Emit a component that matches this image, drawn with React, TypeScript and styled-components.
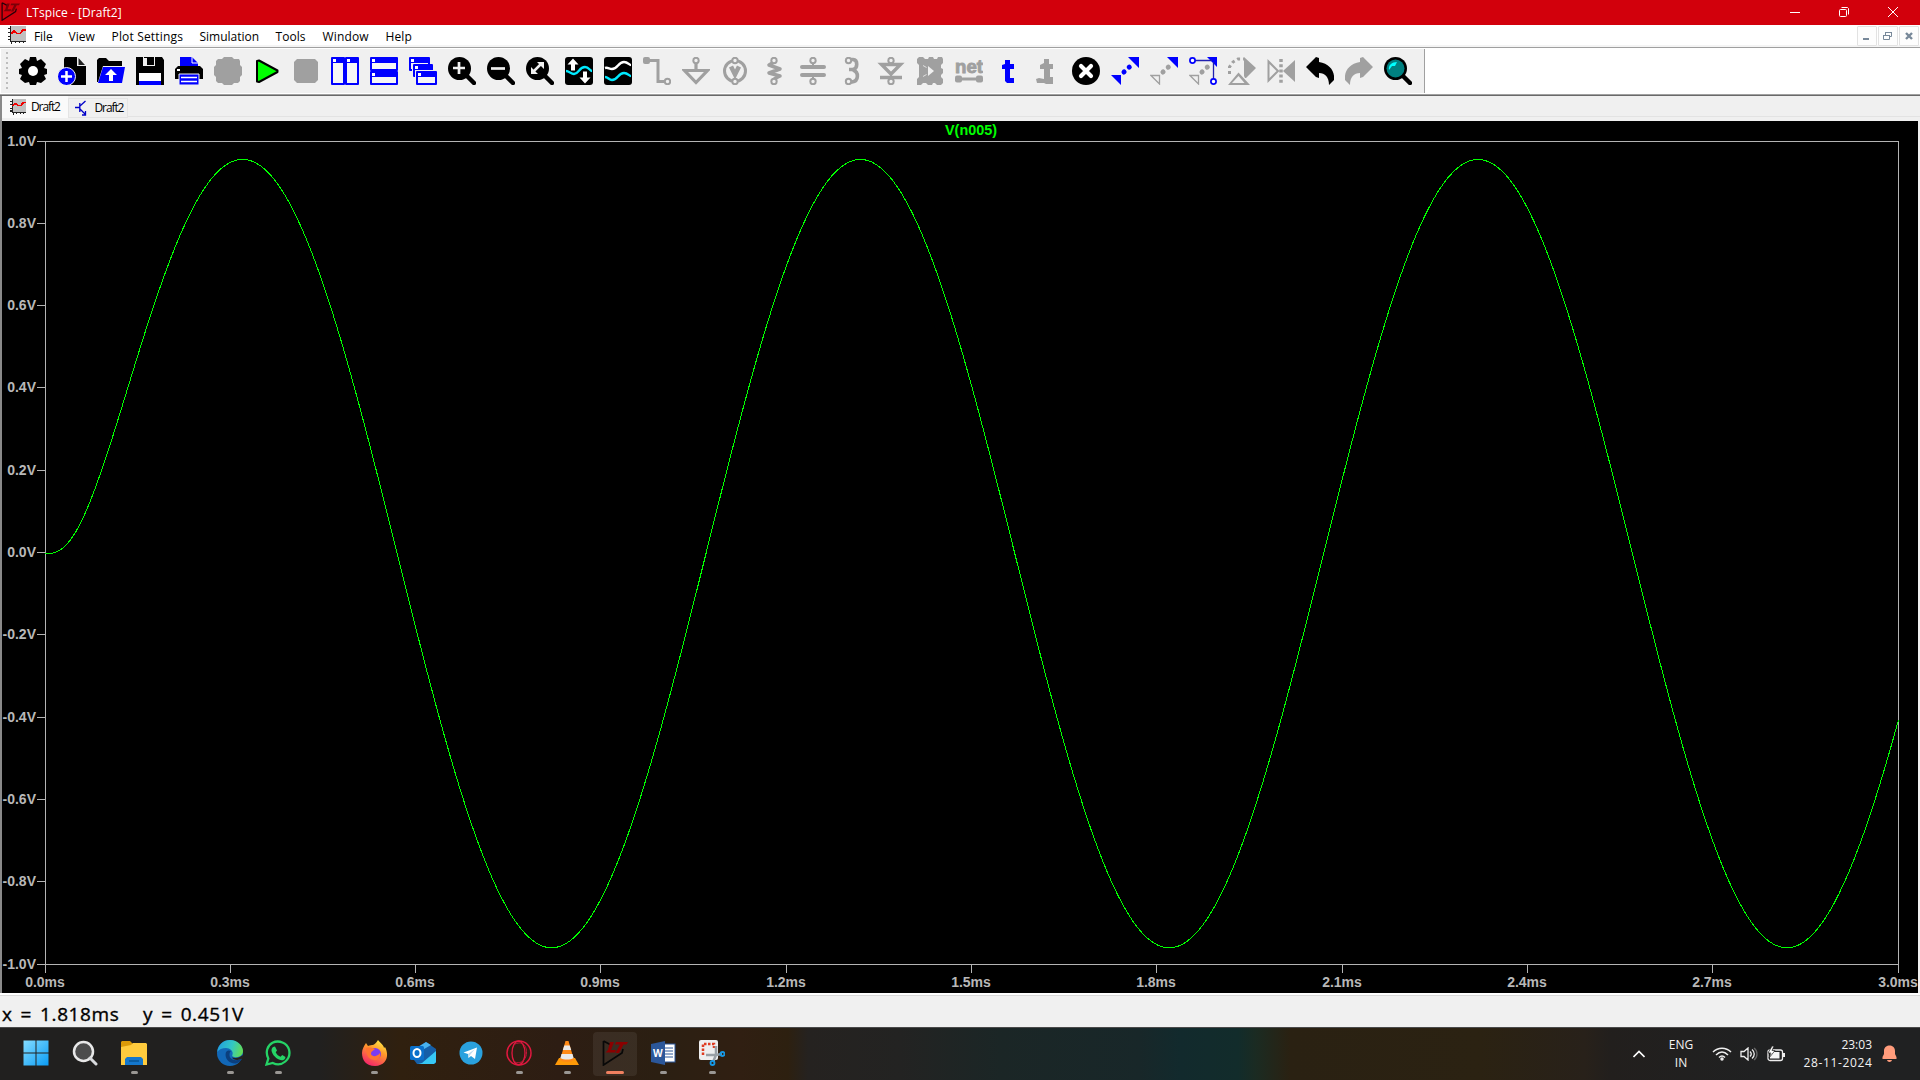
import React from "react";
import styled, { createGlobalStyle } from "styled-components";

const UI = `"Open Sans", "Noto Sans", sans-serif`;

const Global = createGlobalStyle`
  html, body { margin: 0; padding: 0; background: #f0f0f0; overflow: hidden; }
  *, *::before, *::after { box-sizing: border-box; }
`;

const Screen = styled.div`
  width: 1920px;
  height: 1080px;
  display: flex;
  flex-direction: column;
  font-family: ${UI};
  font-size: 12px;
  color: #000;
  white-space: pre;
`;

/* ---------- title and menu ---------- */

const TitleBar = styled.header`
  height: 25px;
  background: #d2000c;
  color: #fff;
  display: flex;
  align-items: center;
  padding: 0 3px 2px 1px;
`;

const Title = styled.span<{ $track: number }>`
  padding-left: 6px;
  flex: 1;
  line-height: 23px;
  padding-top: 2px;
  letter-spacing: ${(p) => p.$track}px;
`;

const CaptionButton = styled.div`
  width: 49px;
  height: 23px;
  display: grid;
  place-items: center;
`;

const MenuBar = styled.nav`
  height: 23px;
  background: #fff;
  border-bottom: 1px solid #a0a0a0;
  box-shadow: inset 0 -2px #f4f4f4;
  display: flex;
  align-items: flex-start;
  padding: 1px 1px 0 8px;
`;

const MenuIcon = styled.div`
  width: 26px;
  height: 18px;
`;

const MenuItem = styled.span<{ $w: number; $track: number }>`
  width: ${(p) => p.$w}px;
  line-height: 21px;
  letter-spacing: ${(p) => p.$track}px;
`;

const Spacer = styled.div`
  flex: 1;
`;

const MdiButton = styled.div`
  width: 20px;
  height: 20px;
  margin-left: 1px;
  background: #fdfdfd;
  border: 1px solid #e2e2e2;
  border-radius: 1px;
  display: grid;
  place-items: center;
`;

/* ---------- toolbar ---------- */

const ToolRow = styled.div`
  height: 48px;
  background: #fff;
  border-bottom: 1px solid #696969;
  box-shadow: inset 0 -1px #a0a0a0;
  display: flex;
  padding: 1px 0 2px 1px;
`;

const Toolbar = styled.div`
  width: 1424px;
  background: #f0f0f0;
  border-right: 1px solid #a0a0a0;
  display: flex;
  align-items: center;
  padding-left: 5px;
`;

const Grip = styled.div`
  width: 2px;
  height: 38px;
  margin-right: 5px;
  background: repeating-linear-gradient(#bdbdbd 0 2px, #f0f0f0 2px 5px);
`;

const Tool = styled.div`
  width: 39px;
  height: 28px;
  margin-top: -1px;
  display: grid;
  place-items: center;
`;

/* ---------- document tabs ---------- */

const TabStrip = styled.div`
  height: 25px;
  background: #f0f0f0;
  border-left: 2px solid #8a8a8a;
  display: flex;
  align-items: flex-start;
  box-shadow: inset 0 -4px #f0f0f0, inset 0 -5px #e3e3e3;
`;

const Tab = styled.div<{ $active?: boolean }>`
  display: flex;
  align-items: center;
  height: ${(p) => (p.$active ? 22 : 20)}px;
  width: ${(p) => (p.$active ? 66 : 60)}px;
  margin-top: ${(p) => (p.$active ? 0 : 2)}px;
  padding-left: ${(p) => (p.$active ? 7 : 6)}px;
  padding-bottom: ${(p) => (p.$active ? 1 : 0)}px;
  background: ${(p) => (p.$active ? "#fafafa" : "#f0f0f0")};
  border: 1px solid ${(p) => (p.$active ? "#fafafa" : "#e4e4e4")};
`;

const TabLabel = styled.span<{ $gap: number }>`
  margin-left: ${(p) => p.$gap}px;
  letter-spacing: -1.1px;
  line-height: 16px;
`;

/* ---------- plot ---------- */

const PlotPane = styled.main`
  height: 872px;
  background: #000;
  border-left: 2px solid #8a8a8a;
  border-right: 2px solid #f0f0f0;
`;

const Axis = styled.text`
  font: bold 14px "Liberation Sans", Arial, sans-serif;
  fill: #b8b8b8;
`;

const Trace = styled(Axis)`
  font-size: 14.4px;
  fill: #00ff00;
`;

const StatusBar = styled.footer`
  height: 34px;
  background: #f0f0f0;
  border-top: 1px solid #fff;
  box-shadow: inset 0 1px #fff, inset 0 2px #d9d9d9;
  display: flex;
  align-items: center;
  padding: 6px 0 0 2px;
  font-size: 19px;
  -webkit-text-stroke: 0.35px #000;
`;

const Reading = styled.span<{ $w: number }>`
  width: ${(p) => p.$w}px;
  line-height: 26px;
  letter-spacing: 0.6px;
  word-spacing: 2.5px;
`;

/* ---------- taskbar ---------- */

const Taskbar = styled.div`
  height: 53px;
  border-top: 1px solid #4a4a4a;
  background: linear-gradient(90deg, #21201f 0, #21201f 320px, #30200f 400px, #2d1d13 560px, #2b1f12 660px, #301f12 740px, #2d2010 788px, #252220 808px, #232322 900px, #1b2626 1000px, #182729 1140px, #122a2d 1180px, #122c2b 1238px, #1b2b22 1256px, #2a2112 1290px, #2b2212 1480px, #28211a 1585px, #221f1d 1610px, #202122 1760px);
  color: #f3f3f3;
  display: flex;
  align-items: center;
`;

const TaskSlot = styled.div<{ $w: number; $active?: boolean }>`
  width: ${(p) => p.$w}px;
  height: 44px;
  margin-left: ${(p) => (p.$active ? 2 : 0)}px;
  display: flex;
  flex-direction: column;
  align-items: center;
  padding-top: 8px;
  border-radius: 4px;
  background: ${(p) => (p.$active ? "rgba(255,255,255,0.07)" : "transparent")};
`;

const RunMark = styled.div<{ $active?: boolean }>`
  width: ${(p) => (p.$active ? 18 : 7)}px;
  height: 3px;
  margin-top: 5px;
  border-radius: 2px;
  background: ${(p) => (p.$active ? "#f08060" : "#9a9794")};
`;

const Tray = styled.div`
  display: flex;
  align-items: center;
  height: 52px;
`;

const TrayIcon = styled.div<{ $w: number }>`
  width: ${(p) => p.$w}px;
  display: flex;
  justify-content: center;
`;

const TrayText = styled.div<{ $w: number; $align: string }>`
  width: ${(p) => p.$w}px;
  text-align: ${(p) => p.$align};
  line-height: 18px;
`;

const DateLine = styled.div`
  letter-spacing: 0.65px;
  margin-right: -0.65px;
`;

/* ---------- icons ---------- */

const B = "#0000ff";
const G = "#a0a0a0";

const LtShape = ({ ink, red }: { ink: string; red: string }) => (
  <>
    <path d="M1.500 1V25L20 13L21 9M1.500 1L9 5" fill="none" stroke={ink} strokeWidth="1.700" />
    <path d="M8 2H12L9 10H14L13 12.500H3.500L6 10ZM14 2H26L24.500 4.500H21.500L17 13H13.500L18 4.500H13Z" fill={red} />
  </>
);

const ChartIcon = ({ size = 18 }: { size?: number }) => (
  <svg width={size} height={size} viewBox="0 0 18 18" shapeRendering="crispEdges">
    <rect x="3" width="15" height="15" fill="#c0c0c0" />
    <path d="M2.500 0V15.500H18M0 2.500H3M0 6.500H3M0 10.500H3M0 13.500H3M3.500 15V18M7.500 15V17M11.500 15V17M15.500 15V17" stroke="#222" fill="none" strokeWidth="1.300" />
    <path d="M3 8L6 5L9 7.500H12L15 4H18" stroke="#f00000" strokeWidth="1.800" fill="none" />
  </svg>
);

const TransistorIcon = () => (
  <svg width="12" height="16" viewBox="0 0 12 16">
    <path d="M0 7.500H4.500M4.800 3V12M5 6L10.500 1M5 9L10.500 14.500M10.500 11V15H7" stroke="#0000c8" strokeWidth="1.300" fill="none" />
  </svg>
);

const Glass = () => (
  <>
    <circle cx="11.500" cy="11.500" r="11.500" fill="#000" />
    <path d="M19 19L26 26" stroke="#000" strokeWidth="4.500" strokeLinecap="round" />
  </>
);

const Win = ({ x, y, w, h }: { x: number; y: number; w: number; h: number }) => (
  <>
    <rect x={x} y={y} width={w} height={h} rx="1" fill={B} />
    <rect x={x + 2} y={y + 6} width={w - 4} height={h - 8} fill="#f6f6f6" />
    <rect x={x + 2} y={y + 2} width="3" height="3" fill="#fff" />
  </>
);

const Pin = ({ x, y }: { x: number; y: number }) => (
  <circle cx={x} cy={y} r="2.700" fill="#f0f0f0" stroke={G} strokeWidth="2" />
);

const tools: React.ReactNode[] = [
  <>
    <path d="M11 0H17L18 4L22 2L27 7L25 11L28 12V17L25 18L27 22L22 26L18 25L17 28H11L10 25L6 26L1 22L3 18L0 17V12L3 11L1 7L6 2L10 4Z" />
    <circle cx="14" cy="14" r="5" fill="#fff" />
  </>,
  <>
    <path d="M7 0H19V9H28V28H6V2Z" />
    <path d="M20.500 1L27 8H20.500Z" fill="#222" />
    <circle cx="8.500" cy="19.500" r="9" fill={B} stroke="#f0f0f0" />
    <path d="M8.500 14V25M3 19.500H14" stroke="#fff" strokeWidth="2.500" />
  </>,
  <>
    <path d="M0 25V3L2 1H9L12 4H25V9H6L1 25Z" />
    <path d="M6 10H28L25 26H1Z" fill={B} />
    <path d="M14 12L20 18H16V24H12V18H8Z" fill="#fff" />
  </>,
  <>
    <path d="M0 0H26L28 3V28H0Z" />
    <path d="M7 0H19V9H7Z" fill="#f0f0f0" />
    <path d="M8 0H18V8H11V1H8Z" />
    <rect x="3" y="16" width="22" height="8" fill="#fff" />
    <rect x="3" y="24" width="22" height="4" fill={B} />
  </>,
  <>
    <path d="M5 0H17L23 6V10H5Z" fill={B} />
    <path d="M17 0V6H23" fill="none" stroke="#fff" />
    <path d="M3 9H25L28 12V22H0V12Z" />
    <path d="M4 17H24V28H4Z" fill={B} stroke="#f0f0f0" />
    <path d="M6 20.500H22M6 24.500H22" stroke="#fff" strokeWidth="1.500" />
    <rect x="2" y="12" width="3" height="2" fill="#fff" />
  </>,
  <path d="M10 0H18L20 2H25L26 4V8L28 10V18L26 20V24L24 26H20L18 28H10L8 26H4L2 24V20L0 18V10L2 8V4L4 2H8Z" fill={G} />,
  <path d="M4 4V24.500L6 25L24.500 15V13.500L6 3.500Z" fill="#00ff00" stroke="#000" strokeWidth="2" strokeLinejoin="round" />,
  <path d="M5 2H23L26 5V23L23 26H5L2 23V5Z" fill={G} />,
  <><Win x={0} y={0} w={14} h={28} /><Win x={14} y={0} w={14} h={28} /></>,
  <><Win x={0} y={0} w={28} h={14} /><Win x={0} y={14} w={28} h={14} /></>,
  <>
    <Win x={0} y={0} w={21} h={14} />
    <path d="M3 7H24V20H3Z" fill="#f0f0f0" /><Win x={4} y={7} w={20} h={13} />
    <path d="M6 13H28V28H6Z" fill="#f0f0f0" /><Win x={7} y={14} w={21} h={14} />
  </>,
  <><Glass /><path d="M11 5V17M5 11H17" stroke="#f0f0f0" strokeWidth="2.700" /></>,
  <><Glass /><path d="M4 11.500H18" stroke="#f0f0f0" strokeWidth="2.700" /></>,
  <><Glass /><path d="M8 14L15 7" stroke="#f0f0f0" strokeWidth="2.500" /><path d="M11 5H18V12ZM5 10V17H12Z" fill="#f0f0f0" /></>,
  <>
    <rect width="28" height="28" rx="3" />
    <path d="M1 14C4 14 6 17 9 17C14 17 14 10 20 10C24 10 25 14 27 14" stroke="#00eaff" strokeWidth="2.300" fill="none" />
    <path d="M8 1.500L13.500 7.500H10V13.500H6V7.500H2.500ZM20 26.500L14.500 20.500H18V14.500H22V20.500H25.500Z" fill="#fff" />
  </>,
  <>
    <rect width="28" height="28" rx="3" />
    <path d="M1 11C4 10 5 12 8 12C14 12 14 5 20 5C24 5 25 8 27 8" stroke="#fff" strokeWidth="2.500" fill="none" />
    <path d="M1 20C4 20 5 23 8 23C14 23 14 16 20 16C24 16 25 19 27 19" stroke="#00eaff" strokeWidth="2.500" fill="none" />
  </>,
  <>
    <path d="M4 3.500H15V24.500H23" stroke={G} strokeWidth="3" fill="none" />
    <rect x="0" y="0" width="7" height="7" rx="2" fill={G} /><Pin x={24.500} y={24.500} />
  </>,
  <><path d="M14 5V13M2.500 13.500H25.500L14 25.500Z" stroke={G} strokeWidth="3.200" fill="none" /><Pin x={14} y={3.500} /></>,
  <><circle cx="14" cy="14" r="10.500" stroke={G} strokeWidth="3" fill="none" /><path d="M10 9.500L14 17.500L18 9.500" stroke={G} strokeWidth="4.500" fill="none" /><Pin x={14} y={3.500} /><Pin x={14} y={24.500} /></>,
  <><path d="M14 5L9 8L20 12L9 16L20 19L14 22" stroke={G} strokeWidth="3.500" fill="none" strokeLinejoin="round" /><Pin x={14} y={3.500} /><Pin x={14} y={24.500} /></>,
  <><path d="M3 10H25M3 18H25" stroke={G} strokeWidth="4" strokeLinecap="round" /><path d="M14 4V9M14 19V24" stroke={G} strokeWidth="2" /><Pin x={14} y={3.500} /><Pin x={14} y={24.500} /></>,
  <><path d="M11 2.500H15C20 3 20 11 15 12.500H11M15 13C21 15 21 24 14 25H10" stroke={G} strokeWidth="3.600" fill="none" /><Pin x={10.500} y={3.500} /><Pin x={10.500} y={24.500} /></>,
  <><path d="M4.500 7.500H23.500L14 17ZM3 20.500H25" stroke={G} strokeWidth="3.400" fill="none" /><path d="M14 18V22" stroke={G} strokeWidth="2" /><Pin x={14} y={3.500} /><Pin x={14} y={24.500} /></>,
  <>
    <path d="M1 2L3 0H7L9 2H12L13 0H17L18 2H21L22 0H26L27 2V6L25 8V11L27 12V16L25 18V20L27 22V26L25 28H21L19 26H17L16 28H12L10 26H7L5 28H1V22L3 20V8L1 6Z" fill={G} />
    <path d="M12 9V19L18 14Z" fill="#f0f0f0" />
    <path d="M7 8.500L10.500 10.500M7 19.500L10.500 17.500" stroke="#f0f0f0" strokeWidth="0.800" />
  </>,
  <>
    <text x="14" y="16" textAnchor="middle" textLength="28" lengthAdjust="spacingAndGlyphs" fill={G} stroke={G} strokeWidth="0.900" fontFamily="Liberation Sans" fontWeight="bold" fontSize="19">net</text>
    <path d="M4 22H24" stroke={G} strokeWidth="3" /><rect y="18.500" width="7" height="7" rx="2" fill={G} /><rect x="21" y="18.500" width="7" height="7" rx="2" fill={G} />
  </>,
  <path d="M11 3H16V7H20V12H16V21H20V26H13L11 24V12H8V8L11 7Z" fill={B} />,
  <path d="M11 2H16V7H20V12H17V20H20V27H13L11 26H4L3 22L6 21L11 22V12H7V8L11 6Z" fill={G} />,
  <><circle cx="14" cy="14" r="14" /><path d="M9 9L19 19M19 9L9 19" stroke="#fff" strokeWidth="4.200" strokeLinecap="round" /></>,
  <><path d="M17 0H28V11ZM0 18H10V28Z" fill={B} /><path d="M13 15L20 8.500" stroke={B} strokeWidth="5" strokeLinecap="round" strokeDasharray="0.100 7" /></>,
  <><path d="M17 0H28V11Z" fill={B} /><path d="M1 18.500H9.500V27Z" fill="none" stroke={G} strokeWidth="1.300" /><path d="M13 15L19 9.500" stroke={G} strokeWidth="5" strokeLinecap="round" strokeDasharray="0.100 7" /></>,
  <>
    <path d="M1 18.500H9.500V27Z" fill="none" stroke={G} strokeWidth="1.300" /><path d="M13 15L19 9.500" stroke={G} strokeWidth="5" strokeLinecap="round" strokeDasharray="0.100 7" />
    <path d="M18 0H28V10Z" fill={B} /><path d="M6 3.500H23M24.500 5V22" stroke="#2020b0" strokeWidth="1.300" />
    <circle cx="3.500" cy="3.500" r="2.600" fill="#fff" stroke={B} strokeWidth="1.700" /><circle cx="24.500" cy="24.500" r="2.600" fill="#fff" stroke={B} strokeWidth="1.700" />
  </>,
  <>
    <path d="M16 0L28 11L18 21H17L16 19ZM10.500 15.500L22 28H0Z" fill={G} /><path d="M10.500 19L16.500 26H4Z" fill="#f0f0f0" />
    <path d="M1.500 17V10L5 5L10 2H16" fill="none" stroke={G} strokeWidth="3" strokeDasharray="3 3" />
  </>,
  <><path d="M1.500 4.500V23.500L11 14Z" fill="none" stroke={G} strokeWidth="2" /><path d="M28 3V25L16 14Z" fill={G} /><path d="M14 2V27" stroke={G} strokeWidth="3.500" strokeDasharray="3 2.200" /></>,
  <path d="M0 10L10 0L13 1V5C24 7 29 14 28 23L23 28C23 20 19 16 13 16V21L10 20Z" />,
  <path d="M28 10L18 0L15 1V5C4 7 -1 14 0 23L5 28C5 20 9 16 15 16V21L18 20Z" fill={G} />,
  <>
    <path d="M19 19L26 26" stroke="#000" strokeWidth="4.500" strokeLinecap="round" /><circle cx="11.500" cy="11.500" r="11.500" />
    <circle cx="11.500" cy="11.500" r="9" fill="#008080" /><path d="M5 13C4 8 8 5 13 5L11 9L8 9Z" fill="#00ffff" />
  </>,
];

const TaskSvg = ({ children, size = 26 }: { children: React.ReactNode; size?: number }) => (
  <svg width={size} height={size} viewBox="0 0 26 26">{children}</svg>
);

const apps: { w: number; run?: boolean; active?: boolean; icon: React.ReactNode }[] = [
  {
    w: 48,
    icon: (
      <>
        <defs><linearGradient id="win" x1="0" y1="0" x2="1" y2="1"><stop offset="0" stopColor="#84dcff" /><stop offset="1" stopColor="#0a9cf5" /></linearGradient></defs>
        <path d="M0.500 0.500H12.500V12.500H0.500ZM13.500 0.500H25.500V12.500H13.500ZM0.500 13.500H12.500V25.500H0.500ZM13.500 13.500H25.500V25.500H13.500Z" fill="url(#win)" />
      </>
    ),
  },
  { w: 50, icon: <><circle cx="11.500" cy="11.500" r="9.500" fill="#4c4c4c" stroke="#e8e8e8" strokeWidth="2.500" /><path d="M18 18L24 24" stroke="#d8dadd" strokeWidth="3" strokeLinecap="round" /></> },
  {
    w: 48, run: true,
    icon: <><path d="M0 2L1 1H9L12 4V8H0Z" fill="#dc9a08" /><path d="M0 7L10 5L12 3H25L26 4V25H0Z" fill="#ffcb3d" /><path d="M4 25V19L6 17H20L22 19V25Z" fill="#1477cc" /><path d="M8 21H18" stroke="#075496" strokeWidth="1.500" /></>,
  },
  { w: 48, icon: null },
  {
    w: 48, run: true,
    icon: (
      <>
        <defs><linearGradient id="edge" x1="0" y1="0.300" x2="1" y2="0.500"><stop offset="0" stopColor="#229fdf" /><stop offset="0.550" stopColor="#32c7c5" /><stop offset="1" stopColor="#63dc54" /></linearGradient></defs>
        <circle cx="13" cy="13" r="13" fill="#1268b8" />
        <path d="M0.300 12C1 4.500 6.500 0 13 0C21 0 26 6 26 11C26 16 21 18 17 17C15 16.500 15 15.500 15.500 14.500C16.500 11 13 8 9 8C5 8 2 9.500 0.300 12Z" fill="url(#edge)" />
        <path d="M9 12C7 18 12 24 19 23.500C21.500 23 24 21 25 18.500C19 22 12 20 12.500 14C12.600 12 14 11 14 11C12 10 10 10.500 9 12Z" fill="#0b3f7e" />
        <path d="M25 18.800C20 21 16 19.500 15 17.500C18 18.500 23 18 25.500 15L26.500 17Z" fill="#26221f" />
      </>
    ),
  },
  {
    w: 48, run: true,
    icon: <><path d="M1.500 24.500L3.300 18.500C0 12 2.500 5.500 7.500 2.800C14 -0.500 22 3 24 9.500C26.500 19 17 27.500 7.800 23Z" fill="none" stroke="#25d366" strokeWidth="2.300" /><path d="M8 7L10 6.500L12 10.500L10.700 12.300C12 14.800 13.500 16 15.500 16.800L17.300 15L20.500 17C20.500 19.500 18 20.500 16.500 20.300C11.500 19.500 7 14.500 6.500 10.500C6.500 9 7 8 8 7Z" fill="#25d366" /></>,
  },
  { w: 48, icon: null },
  {
    w: 49, run: true,
    icon: (
      <>
        <defs><linearGradient id="fox" x1="0.800" y1="0" x2="0.300" y2="1"><stop offset="0" stopColor="#fff34a" /><stop offset="0.400" stopColor="#ff9a2a" /><stop offset="1" stopColor="#f5226c" /></linearGradient></defs>
        <path d="M16 0C18 3 22 5 22 8L23 7C27 14 26 25 13 26C4 26 0 20 0 13C0 9 2 6 4 3L6 6C8 5 10 5 11 5C13 4 14 3 16 0Z" fill="url(#fox)" />
        <circle cx="13" cy="14" r="6" fill="#7a3cf0" /><path d="M4 8C8 7 10 8 13 9C11 11 9 11 9 14C10 17 15 17 18 13C19 18 16 21 12 20C7 20 4 15 4 8Z" fill="#ff7430" />
      </>
    ),
  },
  {
    w: 48,
    icon: <><path d="M4 9L16 2L26 9V23L23 24H7L4 20Z" fill="#155fa8" /><path d="M5 9L16 2L21 5L9 12Z" fill="#49b2ee" /><path d="M12 23L26 11V22L24 24H8Z" fill="#37c8f5" /><rect y="6" width="14" height="14" rx="1.500" fill="#0a70cb" /><ellipse cx="7" cy="13" rx="3.500" ry="4" fill="none" stroke="#fff" strokeWidth="2" /></>,
  },
  { w: 48, icon: <><circle cx="13" cy="13" r="11.500" fill="#2aa1de" /><path d="M5.500 12.500L19 7.500L17 19L13 16L10.500 18L10 14Z" fill="#fff" /><path d="M10 14L17 9L12 15L10.500 18Z" fill="#bddcef" /></> },
  { w: 48, run: true, icon: <><circle cx="13" cy="13" r="12" fill="none" stroke="#e0183f" strokeWidth="1.500" /><ellipse cx="12.500" cy="13" rx="6.500" ry="11.800" fill="none" stroke="#e0183f" strokeWidth="1.300" /><path d="M9 4C18 0 22 8 20 16C18 22 13 24 9 22" fill="none" stroke="#c0183a" strokeWidth="1" /></> },
  { w: 48, run: true, icon: <><path d="M5 18H21L25 25H1Z" fill="#ff9a08" /><path d="M11.500 1H14.500L20 20C17 22.500 9 22.500 6 20Z" fill="#ff8a16" /><path d="M10.300 5.500H15.700L17.200 10H8.800ZM7.500 14H18.500L19.600 18C16 20 10 20 6.400 18Z" fill="#e9e9e9" /></> },
  { w: 44, run: true, active: true, icon: <LtShape ink="#080808" red="#8b0000" /> },
  { w: 52, run: true, icon: <><rect x="12" y="4" width="13" height="18" fill="#fff" stroke="#2b579a" /><path d="M15 8H23M15 11H23M15 14H23M15 17H23" stroke="#2b579a" /><path d="M1 4L15 1V25L1 22Z" fill="#2b579a" /><text x="7.800" y="17" textAnchor="middle" fill="#fff" fontFamily="Open Sans" fontWeight="bold" fontSize="10">W</text></> },
  { w: 46, run: true, icon: <><rect x="0" y="0" width="19" height="20" rx="2" fill="#eeeeef" /><path d="M4 15V4H15V8" fill="none" stroke="#df3b22" strokeWidth="2.500" strokeDasharray="2.500 1.500" /><path d="M17 6V15L14 22M7 15H17L23 14" stroke="#999fa5" strokeWidth="2.500" fill="none" /><circle cx="13.500" cy="23" r="2" fill="none" stroke="#1597e5" strokeWidth="1.800" /><circle cx="23.500" cy="14" r="2" fill="none" stroke="#1597e5" strokeWidth="1.800" /></> },
];

/* ---------- waveform ---------- */

const PX_MS = 1853 / 3;
const LEFT = 43;
const TOP = 20;
const MID = TOP + 411.5;

const wave = (t: number) =>
  0.958 * Math.sin(2 * Math.PI * (t - 0.0693)) + 0.404 * (1 + 14.4 * t) * Math.exp(-28 * t);

const points = Array.from({ length: 371 }, (_, i) => {
  const x = Math.min(i * 5.01, 1853);
  return `${LEFT + x + 0.5},${(MID + 1.1 - wave(x / PX_MS) * 411.5).toFixed(1)}`;
}).join(" ");

const tickY = (i: number) => Math.floor(TOP + i * 82.3);

const Plot = () => (
  <svg width="1916" height="872" style={{ display: "block" }}>
    <g stroke="#b4b4b4" fill="none" shapeRendering="crispEdges">
      <rect x={LEFT + 0.5} y={TOP + 0.5} width="1853" height="823" />
      {Array.from({ length: 11 }, (_, i) => {
        const x = Math.floor(LEFT + i * 185.3) + 0.5;
        return <path key={i} d={`M35 ${tickY(i) + 0.5}H43M${x} 844V852`} />;
      })}
    </g>
    <polyline points={points} fill="none" stroke="#00ff00" strokeWidth="1" shapeRendering="crispEdges" />
    {Array.from({ length: 11 }, (_, i) => (
      <React.Fragment key={i}>
        <Axis x="34" y={tickY(i) + 5} textAnchor="end">{`${((5 - i) / 5).toFixed(1)}V`}</Axis>
        <Axis x={Math.floor(LEFT + i * 185.3)} y="866" textAnchor="middle">{`${(i * 0.3).toFixed(1)}ms`}</Axis>
      </React.Fragment>
    ))}
    <Trace x="969" y="14" textAnchor="middle">V(n005)</Trace>
  </svg>
);

const menu: [string, number, number][] = [
  ["File", 34.5, -0.1], ["View", 43, 0], ["Plot Settings", 88, 0.17], ["Simulation", 76, 0],
  ["Tools", 47, 0.05], ["Window", 63, 0.15], ["Help", 40, 0.1],
];

export default function App() {
  return (
    <Screen>
      <Global />
      <TitleBar>
        <svg width="19" height="19" viewBox="0 0 26 26"><LtShape ink="#26000a" red="#7a0008" /></svg>
        <Title $track={0.05}>LTspice - [Draft2]</Title>
        <CaptionButton><svg width="10" height="10"><path d="M0 5.500H10" stroke="#fff" /></svg></CaptionButton>
        <CaptionButton><svg width="10" height="10" fill="none" stroke="#fff"><rect x="0.500" y="2.500" width="7" height="7" rx="1" /><path d="M2.500 0.500H8.500L9.500 1.500V7.500" /></svg></CaptionButton>
        <CaptionButton><svg width="10" height="10"><path d="M0 0L10 10M10 0L0 10" stroke="#fff" /></svg></CaptionButton>
      </TitleBar>
      <MenuBar>
        <MenuIcon><ChartIcon /></MenuIcon>
        {menu.map(([label, w, track]) => <MenuItem key={label} $w={w} $track={track}>{label}</MenuItem>)}
        <Spacer />
        <MdiButton><svg width="10" height="10"><path d="M1 8H7" stroke="#778899" strokeWidth="2" /></svg></MdiButton>
        <MdiButton><svg width="10" height="10" fill="none" stroke="#778899"><path d="M0.500 4.500H6.500V8.500H0.500ZM0 4.500H7M2.500 4V1.500H8.500V5.500H7M2 1.500H9" /></svg></MdiButton>
        <MdiButton><svg width="10" height="10"><path d="M2 2L8 8M8 2L2 8" stroke="#778899" strokeWidth="2.400" /></svg></MdiButton>
      </MenuBar>
      <ToolRow>
        <Toolbar>
          <Grip />
          {tools.map((icon, i) => (
            <Tool key={i}><svg width="28" height="28" viewBox="0 0 28 28">{icon}</svg></Tool>
          ))}
        </Toolbar>
      </ToolRow>
      <TabStrip>
        <Tab $active><ChartIcon size={16} /><TabLabel $gap={5}>Draft2</TabLabel></Tab>
        <Tab><TransistorIcon /><TabLabel $gap={7.5}>Draft2</TabLabel></Tab>
      </TabStrip>
      <PlotPane><Plot /></PlotPane>
      <StatusBar>
        <Reading $w={141}>x = 1.818ms</Reading>
        <Reading $w={120}>y = 0.451V</Reading>
      </StatusBar>
      <Taskbar>
        <TrayIcon $w={12} />
        {apps.map((a, i) => (
          <TaskSlot key={i} $w={a.w} $active={a.active}>
            {a.icon && <TaskSvg>{a.icon}</TaskSvg>}
            {a.run && <RunMark $active={a.active} />}
          </TaskSlot>
        ))}
        <Spacer />
        <Tray>
          <TrayIcon $w={30}><svg width="12" height="8"><path d="M0.500 7L6 1.500L11.500 7" fill="none" stroke="#fff" strokeWidth="1.600" /></svg></TrayIcon>
          <TrayText $w={54} $align="center">{"ENG\nIN"}</TrayText>
          <TrayIcon $w={28}>
            <svg width="20" height="14" fill="none" stroke="#eee" strokeWidth="1.500"><path d="M1 5C6 0 14 0 19 5M4 8C8 4 12 4 16 8M7 10.500C9 8.500 11 8.500 13 10.500" /><circle cx="10" cy="12" r="1" fill="#eee" /></svg>
          </TrayIcon>
          <TrayIcon $w={26}>
            <svg width="18" height="14" fill="none" stroke="#eee" strokeWidth="1.300"><path d="M1 4.500H4L8 1V13L4 9.500H1ZM10 4.500C11.500 6 11.500 8 10 9.500M12 2.500C15 5 15 9 12 11.500" /><path d="M14 1C18 4 18 10 14 13" stroke="#666" /></svg>
          </TrayIcon>
          <TrayIcon $w={28}>
            <svg width="19" height="16"><rect x="1" y="4" width="14.500" height="10.500" rx="2" fill="none" stroke="#eee" strokeWidth="1.300" /><rect x="3" y="6" width="9.500" height="6.500" fill="#f5f5f5" /><path d="M17 7V11" stroke="#eee" strokeWidth="2" /><path d="M5 0L1 7H4L2 12L8 4.500H5L7 0Z" fill="#fff" stroke="#202020" strokeWidth="0.700" /></svg>
          </TrayIcon>
          <TrayText $w={82} $align="right">23:03<DateLine>28-11-2024</DateLine></TrayText>
          <TrayIcon $w={34}>
            <svg width="15" height="18"><path d="M0.500 14V12L2 9V6C2 2 5 0.500 7.500 0.500S13 2 13 6V9L14.500 12V14ZM5 15H10C9.500 17.500 5.500 17.500 5 15Z" fill="#ff9c7c" /></svg>
          </TrayIcon>
          <TrayIcon $w={14} />
        </Tray>
      </Taskbar>
    </Screen>
  );
}
